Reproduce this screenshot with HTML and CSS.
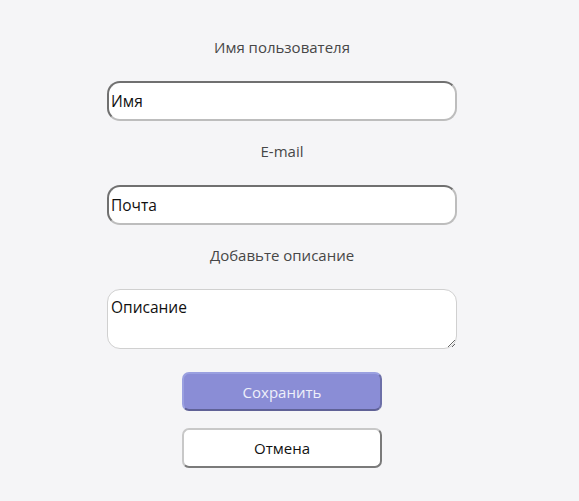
FILE: index.html
```html
<!DOCTYPE html>
<html lang="ru">
<head>
<meta charset="utf-8">
<link rel="stylesheet" href="styles.css">
</head>
<body>
<form class="form">
  <label class="label">Имя пользователя</label>
  <input class="field" type="text" value="Имя">
  <label class="label">E-mail</label>
  <input class="field" type="text" value="Почта">
  <label class="label">Добавьте описание</label>
  <textarea class="area">Описание</textarea>
  <button type="button" class="btn btn-save">Сохранить</button>
  <button type="button" class="btn btn-cancel">Отмена</button>
</form>
</body>
</html>
```
FILE: styles.css
```css
html, body {
  margin: 0;
  padding: 0;
  background: #f5f5f7;
}
body {
  font-family: "Open Sans", "Noto Sans", sans-serif;
  padding-right: 15px;
}
.form {
  width: 350px;
  margin: 0 auto;
  padding-top: 37px;
  display: flex;
  flex-direction: column;
  align-items: center;
}
.label {
  font-size: 15px;
  line-height: 20px;
  color: #474747;
  margin-bottom: 24px;
}
.field {
  box-sizing: border-box;
  width: 350px;
  height: 40px;
  margin: 0 0 20px;
  padding: 0 2px;
  border: 2px solid;
  border-color: #707070 #bdbdbd #bdbdbd #707070;
  border-radius: 13px;
  background: #fff;
  font-family: inherit;
  font-size: 15.5px;
  color: #111;
  outline: none;
}
.area {
  box-sizing: border-box;
  width: 350px;
  height: 60px;
  margin: 0 0 23px;
  padding: 6px 3px;
  border: 1px solid #d0d0d0;
  border-radius: 13px;
  background: #fff;
  font-family: inherit;
  font-size: 15.5px;
  color: #111;
  resize: vertical;
  outline: none;
}
.btn {
  box-sizing: border-box;
  width: 200px;
  font-family: inherit;
  font-size: 15px;
  border-radius: 7px;
  cursor: pointer;
}
.btn-save {
  height: 39px;
  margin-bottom: 17px;
  background: #8a8dd6;
  color: #eef0fa;
  border: 2px solid;
  border-color: #9aa0e0 #6c6fa8 #5f6196 #9aa0e0;
}
.btn-cancel {
  height: 40px;
  background: #fff;
  color: #111;
  border: 2px solid;
  border-color: #c8c8c8 #7a7a7a #7a7a7a #c8c8c8;
}
```
